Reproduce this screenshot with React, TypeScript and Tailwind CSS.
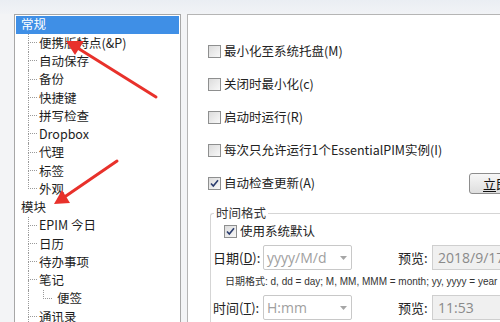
import React from "react";

type TreeItem = {
  label: string;
  kind: "group" | "item" | "child";
  last?: boolean;
  selected?: boolean;
};

const tree: TreeItem[] = [
  { label: "常规", kind: "group", selected: true },
  { label: "便携版特点(&P)", kind: "item" },
  { label: "自动保存", kind: "item" },
  { label: "备份", kind: "item" },
  { label: "快捷键", kind: "item" },
  { label: "拼写检查", kind: "item" },
  { label: "Dropbox", kind: "item" },
  { label: "代理", kind: "item" },
  { label: "标签", kind: "item" },
  { label: "外观", kind: "item", last: true },
  { label: "模块", kind: "group" },
  { label: "EPIM 今日", kind: "item" },
  { label: "日历", kind: "item" },
  { label: "待办事项", kind: "item" },
  { label: "笔记", kind: "item" },
  { label: "便签", kind: "child", last: true },
  { label: "通讯录", kind: "item" },
];

const font = { fontFamily: '"Noto Sans CJK SC", "Noto Sans", sans-serif' };

const Connector = ({ last }: { last?: boolean }) => (
  <div className="flex flex-col w-[9px] h-full shrink-0">
    <div className="h-1/2 border-l border-b border-dotted border-[#9a9a9a]" />
    <div className={last ? "h-1/2" : "h-1/2 border-l border-dotted border-[#9a9a9a]"} />
  </div>
);

const TreeRow = ({ item }: { item: TreeItem }) => {
  if (item.kind === "group") {
    return (
      <div
        className={
          item.selected
            ? "h-[18.27px] flex items-center pl-[5px] mx-[1px] bg-[#3f8fe6] text-white"
            : "h-[18.27px] flex items-center pl-[6px] text-[#1e1e1e]"
        }
      >
        {item.label}
      </div>
    );
  }
  if (item.kind === "child") {
    return (
      <div className="h-[18.27px] flex items-center pl-[13px]">
        <div className="w-[15px] h-full border-l border-dotted border-[#9a9a9a] shrink-0" />
        <Connector last />
        <span className="ml-[5px] text-[#1e1e1e]">{item.label}</span>
      </div>
    );
  }
  return (
    <div className="h-[18.27px] flex items-center pl-[13px]">
      <Connector last={item.last} />
      <span className="ml-[2px] text-[#1e1e1e]">{item.label}</span>
    </div>
  );
};

const CheckBox = ({ checked }: { checked?: boolean }) => (
  <div className="w-[13px] h-[13px] border border-[#8e8f8f] bg-gradient-to-br from-[#dcdcdc] to-[#f8f8f8] flex items-center justify-center shrink-0">
    {checked && (
      <svg width="11" height="11" viewBox="0 0 11 11">
        <path d="M2 5.5 L4.3 8 L9 2.2" fill="none" stroke="#2a3c6e" strokeWidth="1.6" />
      </svg>
    )}
  </div>
);

const CheckRow = ({ label, checked }: { label: string; checked?: boolean }) => (
  <div className="flex items-center gap-[3px] whitespace-nowrap">
    <CheckBox checked={checked} />
    <span className="text-[#222]">{label}</span>
  </div>
);

const Combo = ({ value }: { value: string }) => (
  <div className="w-[89px] h-[25px] shrink-0 border border-[#c8c8c8] bg-white flex items-center justify-between pl-[3px] pr-[4px] rounded-[2px]">
    <span className="text-[14px] text-[#a0a0a0]" style={{ fontFamily: '"Open Sans", sans-serif' }}>{value}</span>
    <svg width="7" height="4" viewBox="0 0 7 4">
      <path d="M0 0 H7 L3.5 4 Z" fill="#a6a6a6" />
    </svg>
  </div>
);

const Preview = ({ value }: { value: string }) => (
  <div className="w-[120px] h-[25px] shrink-0 border border-[#cfcfcf] bg-[#f0f0f0] flex items-center pl-[5px]">
    <span className="text-[14px] text-[#8a8a8a]" style={{ fontFamily: '"Open Sans", sans-serif' }}>{value}</span>
  </div>
);

export default function App() {
  return (
    <div
      className="relative w-[500px] h-[322px] overflow-hidden bg-[#f3f4f6] text-[12.5px] leading-none"
      style={font}
    >
      <div className="h-[14px] bg-gradient-to-b from-[#eaeef3] to-[#f1f3f6]" />
      <div className="flex pl-[14px] h-[308px]">
        {/* tree */}
        <div className="w-[167px] h-[320px] bg-white border border-[#a7a7a7] pt-[0.6px] shrink-0">
          {tree.map((t, i) => (
            <TreeRow key={i} item={t} />
          ))}
        </div>

        {/* options */}
        <div className="ml-[6px] w-[360px] h-[320px] shrink-0 bg-white border border-[#b5b5b5] pl-[20px] pt-[19.5px]">
          {[
            { label: "最小化至系统托盘(M)" },
            { label: "关闭时最小化(c)" },
            { label: "启动时运行(R)" },
            { label: "每次只允许运行1个EssentialPIM实例(I)" },
          ].map((r) => (
            <div key={r.label} className="h-[33px] flex items-center">
              <CheckRow label={r.label} />
            </div>
          ))}
          <div className="h-[33px] flex items-center">
            <div className="w-[261px] shrink-0">
              <CheckRow label="自动检查更新(A)" checked />
            </div>
            <div className="w-[90px] h-[21px] shrink-0 border border-[#8d8d8d] rounded-[3px] bg-gradient-to-b from-[#f7f7f7] to-[#dedede] flex items-center pl-[13px] text-[#111] text-[13px] whitespace-nowrap">
              <span className="underline underline-offset-2">立</span>即检查
            </div>
          </div>

          {/* group box */}
          <div className="relative mt-[13.5px] ml-[2px] w-[340px] h-[140px] border-l border-t border-[#d5d5d5] rounded-tl-[3px]">
            <span className="absolute left-[3px] -top-[7px] bg-white px-[2px] text-[#333]">时间格式</span>
            <div className="pt-[9px] pl-[13px] h-[26px] flex items-center">
              <CheckRow label="使用系统默认" checked />
            </div>
            <div className="mt-[5px] flex items-center h-[25px] pl-[2px]">
              <span className="w-[50px] shrink-0 text-[13px] text-[#222] whitespace-nowrap">
                日期(<span className="underline">D</span>):
              </span>
              <Combo value="yyyy/M/d" />
              <span className="ml-[46px] w-[34px] shrink-0 text-[13px] text-[#222]">预览:</span>
              <Preview value="2018/9/17" />
            </div>
            <div
              className="mt-[7px] pl-[14px] h-[10px] flex items-center text-[10px] text-[#333] whitespace-nowrap"
              style={{ fontFamily: '"Liberation Sans", "Noto Sans CJK SC", sans-serif' }}
            >
              日期格式: d, dd = day; M, MM, MMM = month; yy, yyyy = year
            </div>
            <div className="mt-[8px] flex items-center h-[25px] pl-[2px]">
              <span className="w-[50px] shrink-0 text-[13px] text-[#222] whitespace-nowrap">
                时间(<span className="underline">T</span>):
              </span>
              <Combo value="H:mm" />
              <span className="ml-[46px] w-[34px] shrink-0 text-[13px] text-[#222]">预览:</span>
              <Preview value="11:53" />
            </div>
          </div>
        </div>
      </div>

      {/* red annotation arrows */}
      <svg className="absolute left-0 top-0 pointer-events-none" width="500" height="322">
        <line x1="156" y1="97" x2="76" y2="47" stroke="#e8312b" strokeWidth="3" strokeLinecap="round" />
        <polygon points="66,41 84,41 75,55" fill="#e8312b" />
        <line x1="117" y1="161" x2="63" y2="198" stroke="#e8312b" strokeWidth="3" strokeLinecap="round" />
        <polygon points="54,204 62,190 70,203" fill="#e8312b" />
      </svg>
    </div>
  );
}
